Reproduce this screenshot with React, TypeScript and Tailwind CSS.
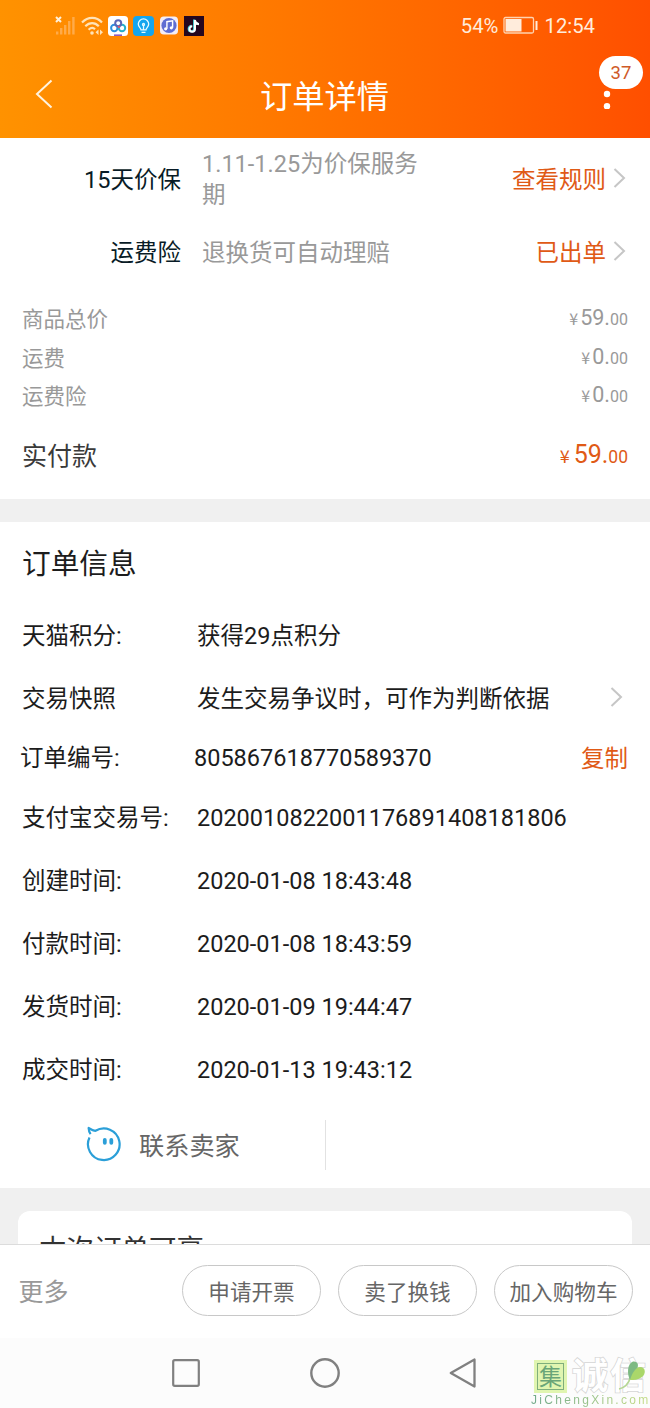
import React from 'react';

interface PriceRow {
    label: string;
    yuan: string;
    cents: string;
}

interface InfoRow {
    label: string;
    value: string;
    height: string;
    action?: 'chevron' | 'copy';
}

const prices: PriceRow[] = [
    { label: '商品总价', yuan: '59.', cents: '00' },
    { label: '运费', yuan: '0.', cents: '00' },
    { label: '运费险', yuan: '0.', cents: '00' },
];

const orderInfo: InfoRow[] = [
    { label: '天猫积分:', value: '获得29点积分', height: 'h-[62px]' },
    { label: '交易快照', value: '发生交易争议时，可作为判断依据', height: 'h-16', action: 'chevron' },
    { label: '订单编号:', value: '805867618770589370', height: 'h-14', action: 'copy' },
    { label: '支付宝交易号:', value: '2020010822001176891408181806', height: 'h-[62px]' },
    { label: '创建时间:', value: '2020-01-08 18:43:48', height: 'h-16' },
    { label: '付款时间:', value: '2020-01-08 18:43:59', height: 'h-[63px]' },
    { label: '发货时间:', value: '2020-01-09 19:44:47', height: 'h-[63px]' },
    { label: '成交时间:', value: '2020-01-13 19:43:12', height: 'h-[63px]' },
];

const Chevron: React.FC<{ className?: string }> = ({ className }) => (
    <svg className={className} width="13" height="20" viewBox="0 0 13 20" fill="none" stroke="#c6c6c6" strokeWidth="2">
        <path d="M1.5 1L11 10L1.5 19" />
    </svg>
);

const StatusIcons: React.FC = () => (
    <div className="flex items-center">
        {/* no signal */}
        <svg width="21" height="20" viewBox="0 0 21 20">
            <path d="M1 1l5 5M6 1L1 6" stroke="#fff0d8" strokeWidth="2" />
            <g fill="#ffab4a">
                <rect x="1" y="15.5" width="2.4" height="3" />
                <rect x="5" y="12" width="2.4" height="6.5" />
                <rect x="9" y="9" width="2.4" height="9.5" />
                <rect x="13" y="5" width="2.4" height="13.5" />
                <rect x="17.2" y="1" width="2.4" height="17.5" />
            </g>
        </svg>
        {/* wifi */}
        <svg className="ml-[5px]" width="23" height="20" viewBox="0 0 23 20" fill="none" stroke="#ffe3b8" strokeWidth="2.2">
            <path d="M1 6.5C7 .3 15.5 .3 21 6.5" />
            <path d="M4.3 10.2C8.5 6 13.8 6 17.8 10.2" />
            <path d="M7.6 13.7C9.8 11.6 12.4 11.6 14 13.2" />
            <circle cx="11" cy="17" r="1.8" fill="#ffe3b8" stroke="none" />
            <path d="M17.5 13.5v5.5l-3-2.7zM19 13.5v5.5l3-2.7z" fill="#ffe3b8" stroke="none" />
        </svg>
        {/* cloud disk */}
        <svg className="ml-1" width="20" height="20" viewBox="0 0 20 20" fill="none" strokeWidth="2">
            <rect width="20" height="20" rx="3.5" fill="#fff" />
            <circle cx="6.3" cy="12" r="3.2" stroke="#2d8fdc" />
            <circle cx="14" cy="12" r="3.2" stroke="#27b0c9" />
            <circle cx="10.2" cy="7.3" r="3" stroke="#5b66b8" />
            <path d="M10.2 10.2l1.5 1.6" stroke="#e0536c" />
            <path d="M6 19.2h8" stroke="#8d5cc0" strokeWidth="1.6" />
        </svg>
        {/* bulb */}
        <svg className="ml-[5px]" width="21" height="20" viewBox="0 0 21 20" fill="none" stroke="#e6faff" strokeWidth="1.3">
            <rect width="21" height="20" rx="4" fill="#14a5ee" stroke="none" />
            <path d="M8 13.8c0-2-2.7-2.7-2.7-5.7a5.2 5.2 0 0 1 10.4 0c0 3-2.7 3.7-2.7 5.7zM8.5 16.3h4M10.5 13.5V9" />
            <circle cx="10.5" cy="8.5" r="1" />
        </svg>
        {/* music */}
        <svg className="ml-1.5" width="18" height="19" viewBox="0 0 19 19">
            <rect width="19" height="19" rx="4" fill="#f4ecf5" />
            <circle cx="9.5" cy="9.5" r="8" fill="#5f6dd2" />
            <path d="M7.3 13V5.5l6-1V12" fill="none" stroke="#fff" strokeWidth="1.5" />
            <circle cx="6" cy="13" r="1.7" fill="#fff" />
            <circle cx="12" cy="12" r="1.7" fill="#fff" />
        </svg>
        {/* short video */}
        <svg className="ml-1.5" width="20" height="20" viewBox="0 0 20 20" fill="none" strokeWidth="2.3">
            <rect width="20" height="20" fill="#25071f" />
            <path d="M10.2 3.5v9.2a2.7 2.7 0 1 1-2.7-2.7M10.2 4c.3 2.3 1.8 3.7 4 3.9" stroke="#4fd3dc" />
            <path d="M11 4v9a2.7 2.7 0 1 1-2.7-2.7M11 4.3c.3 2.3 1.8 3.7 4 3.9" stroke="#fff" strokeWidth="2" />
        </svg>
    </div>
);

const Header: React.FC = () => (
    <header className="h-[138px] shrink-0 bg-linear-to-r from-[#ff9200] to-[#ff4f00] text-white">
        <div className="flex h-[51px] items-center justify-between pr-[55px] pl-[55px]">
            <StatusIcons />
            <div className="flex items-center text-[20.3px] leading-none text-[#ffecdc]">
                <span className="pt-0.5">54%</span>
                <svg className="mx-[5px]" width="36" height="18" viewBox="0 0 36 18">
                    <rect x="1" y="1.5" width="29.5" height="15.5" rx="1.5" fill="none" stroke="#ffd3b0" strokeWidth="1.3" />
                    <rect x="2.5" y="3" width="16" height="12.5" fill="#ffecdc" />
                    <rect x="32.5" y="5" width="2" height="9" fill="#ffecdc" />
                </svg>
                <span className="pt-0.5">12:54</span>
            </div>
        </div>
        <div className="flex h-[86px] items-center justify-between pr-[39px] pl-[35px]">
            <svg width="18" height="30" viewBox="0 0 18 30" fill="none" stroke="#fff3df" strokeWidth="2">
                <path d="M16.5 1.5L2 15l14.5 13.5" />
            </svg>
            <h1 className="mr-[7px] pt-[7px] text-[32.3px] leading-none">订单详情</h1>
            <div className="relative h-[30px] w-2">
                <svg width="8" height="30" viewBox="0 0 8 30" fill="#fff">
                    <circle cx="4" cy="3" r="3.2" />
                    <circle cx="4" cy="15" r="3.2" />
                    <circle cx="4" cy="27.3" r="3.2" />
                </svg>
                <span className="absolute -top-[23px] -left-1 flex h-[33px] w-11 items-center justify-center rounded-full bg-white pt-px text-[18.5px] leading-none text-[#cf5a28]">37</span>
            </div>
        </div>
    </header>
);

const App: React.FC = () => {
    return (
        <div lang="zh-CN" className="flex h-[1408px] w-[650px] flex-col overflow-hidden bg-white font-['Roboto','Noto_Sans_CJK_SC',sans-serif]">
            <Header />

            <main className="flex h-[1106px] shrink-0 flex-col overflow-hidden bg-[#f0f0f0]">
                <section className="h-[361px] shrink-0 bg-white">
                    <div className="flex h-[82px] items-center pr-6 text-[23.5px] leading-none">
                        <span className="w-[181px] pt-[3px] text-right text-[#081b26]">15天价保</span>
                        <span className="ml-[21px] w-[225px] pt-px leading-[31px] text-[#999]">1.11-1.25为价保服务期</span>
                        <span className="ml-auto pt-[3px] text-[#e05a16]">查看规则</span>
                        <Chevron className="mb-[3px] ml-[7px]" />
                    </div>
                    <div className="flex h-16 items-center pr-6 text-[23.5px] leading-none">
                        <span className="w-[181px] pt-[3px] text-right text-[#081b26]">运费险</span>
                        <span className="ml-[21px] pt-[3px] text-[#999]">退换货可自动理赔</span>
                        <span className="ml-auto pt-[3px] text-[#e05a16]">已出单</span>
                        <Chevron className="mb-[3px] ml-[7px]" />
                    </div>
                    <div className="px-[22px] pt-4">
                        {prices.map(row => (
                            <div key={row.label} className="flex h-[38.5px] items-center justify-between text-[21.5px] leading-none text-[#999]">
                                <span className="pt-px">{row.label}</span>
                                <span className="pb-[3px]"><span className="mr-0.5 font-['Noto_Sans_CJK_SC'] text-[16px]">¥</span>{row.yuan}<span className="text-[16px]">{row.cents}</span></span>
                            </div>
                        ))}
                        <div className="flex h-[81px] items-center justify-between text-[25px] leading-none text-[#3a3a3a]">
                            <span className="pt-px">实付款</span>
                            <span className="pb-[3px] text-[#e05a16]"><span className="mr-1 font-['Noto_Sans_CJK_SC'] text-[18px]">¥</span>59.<span className="text-[17.5px]">00</span></span>
                        </div>
                    </div>
                </section>

                <section className="mt-[23px] h-[666px] shrink-0 bg-white text-[#1c1c1c]">
                    <h2 className="flex h-[83px] items-center px-[22px] pt-px text-[28.7px] leading-none">订单信息</h2>
                    {orderInfo.map(row => (
                        <div
                            key={row.label}
                            className={`flex items-center pr-[22px] text-[23.5px] leading-none ${row.height} ${row.action === 'copy' ? 'pl-5' : 'pl-[22px]'}`}
                        >
                            <span className={row.action === 'copy' ? 'w-[174px]' : 'w-[175px] pt-px'}>{row.label}</span>
                            <span className={row.action === 'copy' ? 'pb-px' : 'pt-px'}>{row.value}</span>
                            {row.action === 'chevron' && <Chevron className="mr-[5px] mb-1 ml-auto" />}
                            {row.action === 'copy' && <button className="ml-auto pt-px text-[#e05a16]">复制</button>}
                        </div>
                    ))}
                    <div className="flex h-[85px] items-center">
                        <div className="flex h-[50px] w-[326px] items-center border-r border-[#e2e2e2] pl-[86px]">
                            <svg className="mb-0.5" width="36" height="36" viewBox="0 0 36 36" fill="none" stroke="#2b9fd8" strokeWidth="2.2">
                                <path d="M3.5 11.5A15.8 15.8 0 1 0 9.5 4.8C7.5 4.8 5.5 3.8 2.6 2C2.7 4.8 3.6 6.8 4.6 8.2" strokeLinejoin="round" />
                                <path d="M18.8 14v2.8M25.3 14v2.8" strokeWidth="3.8" strokeLinecap="round" />
                            </svg>
                            <span className="ml-[17px] pt-[5px] text-[25.2px] leading-none text-[#666]">联系卖家</span>
                        </div>
                    </div>
                </section>

                <section className="mx-[18px] mt-[23px] h-[100px] shrink-0 rounded-xl bg-white px-[21px] pt-[25px]">
                    <h2 className="text-[27.5px] leading-none text-[#333]">本次订单可享</h2>
                </section>
            </main>

            <footer className="flex h-[94px] shrink-0 items-center justify-between border-t border-[#dcdcdc] pr-[17px] pb-0.5 pl-[18.5px] text-[#666]">
                <span className="pt-1 text-[25px] leading-none text-[#999]">更多</span>
                <div className="flex gap-[17px] text-[21.6px] leading-none">
                    <button className="h-[51px] w-[139px] rounded-full border border-[#c8c8c8] pt-1">申请开票</button>
                    <button className="h-[51px] w-[139px] rounded-full border border-[#c8c8c8] pt-1">卖了换钱</button>
                    <button className="h-[51px] w-[139px] rounded-full border border-[#c8c8c8] pt-1">加入购物车</button>
                </div>
            </footer>

            <nav className="relative flex h-[70px] shrink-0 items-center justify-center gap-[109px] bg-[#fcfcfc]">
                <svg className="-ml-0.5" width="28" height="28" viewBox="0 0 28 28" fill="none" stroke="#808080" strokeWidth="2.2">
                    <rect x="1.2" y="1.2" width="25.6" height="25.6" rx="1.5" />
                </svg>
                <svg className="ml-px" width="30" height="30" viewBox="0 0 30 30" fill="none" stroke="#808080" strokeWidth="2.4">
                    <circle cx="15" cy="15" r="13.7" />
                </svg>
                <svg width="28" height="30" viewBox="0 0 28 30" fill="none" stroke="#808080" strokeWidth="2.3" strokeLinejoin="round">
                    <path d="M25.5 1.5v27L1.8 15z" />
                </svg>

                {/* site watermark */}
                <div className="absolute top-[22px] left-[530px] w-[120px]">
                    <div className="flex h-[33px] items-center pl-1">
                        <span className="flex size-[33px] shrink-0 items-center justify-center bg-[#e0f5b0] p-[3px]">
                            <span className="flex size-full items-center justify-center border-[1.5px] border-[#7fae7c] pt-0.5 text-[23px] leading-none text-[#6aa578]">集</span>
                        </span>
                        <span className="ml-[5px] pt-0.5 text-[36px] leading-[33px] font-bold tracking-[2px] whitespace-nowrap text-white [-webkit-text-stroke:1.6px_#d6d6d6] [paint-order:stroke_fill]">诚信</span>
                    </div>
                    <svg className="absolute top-0 left-[88px]" width="30" height="32" viewBox="0 0 30 32">
                        <path d="M1 29C6 28 11 24 12 18" fill="none" stroke="#b5d795" strokeWidth="1.6" />
                        <path d="M12 20C9 14 9 4 15 1.5C20 1 21 5 19 9C18 13 15 17 12 20z" fill="#7dba83" />
                        <path d="M12 20C14 13 18 7 22 7C28 7 28 14 24 17C20 20 16 20 12 20z" fill="#aad76a" />
                    </svg>
                    <div className="w-[120px] bg-linear-to-r from-[#6fa98a] to-[#c4dc85] bg-clip-text pl-px font-['Liberation_Sans'] text-[12px] leading-[15px] tracking-[2.3px] whitespace-nowrap text-transparent">JiChengXin.com</div>
                </div>
            </nav>
        </div>
    );
};

export default App;
